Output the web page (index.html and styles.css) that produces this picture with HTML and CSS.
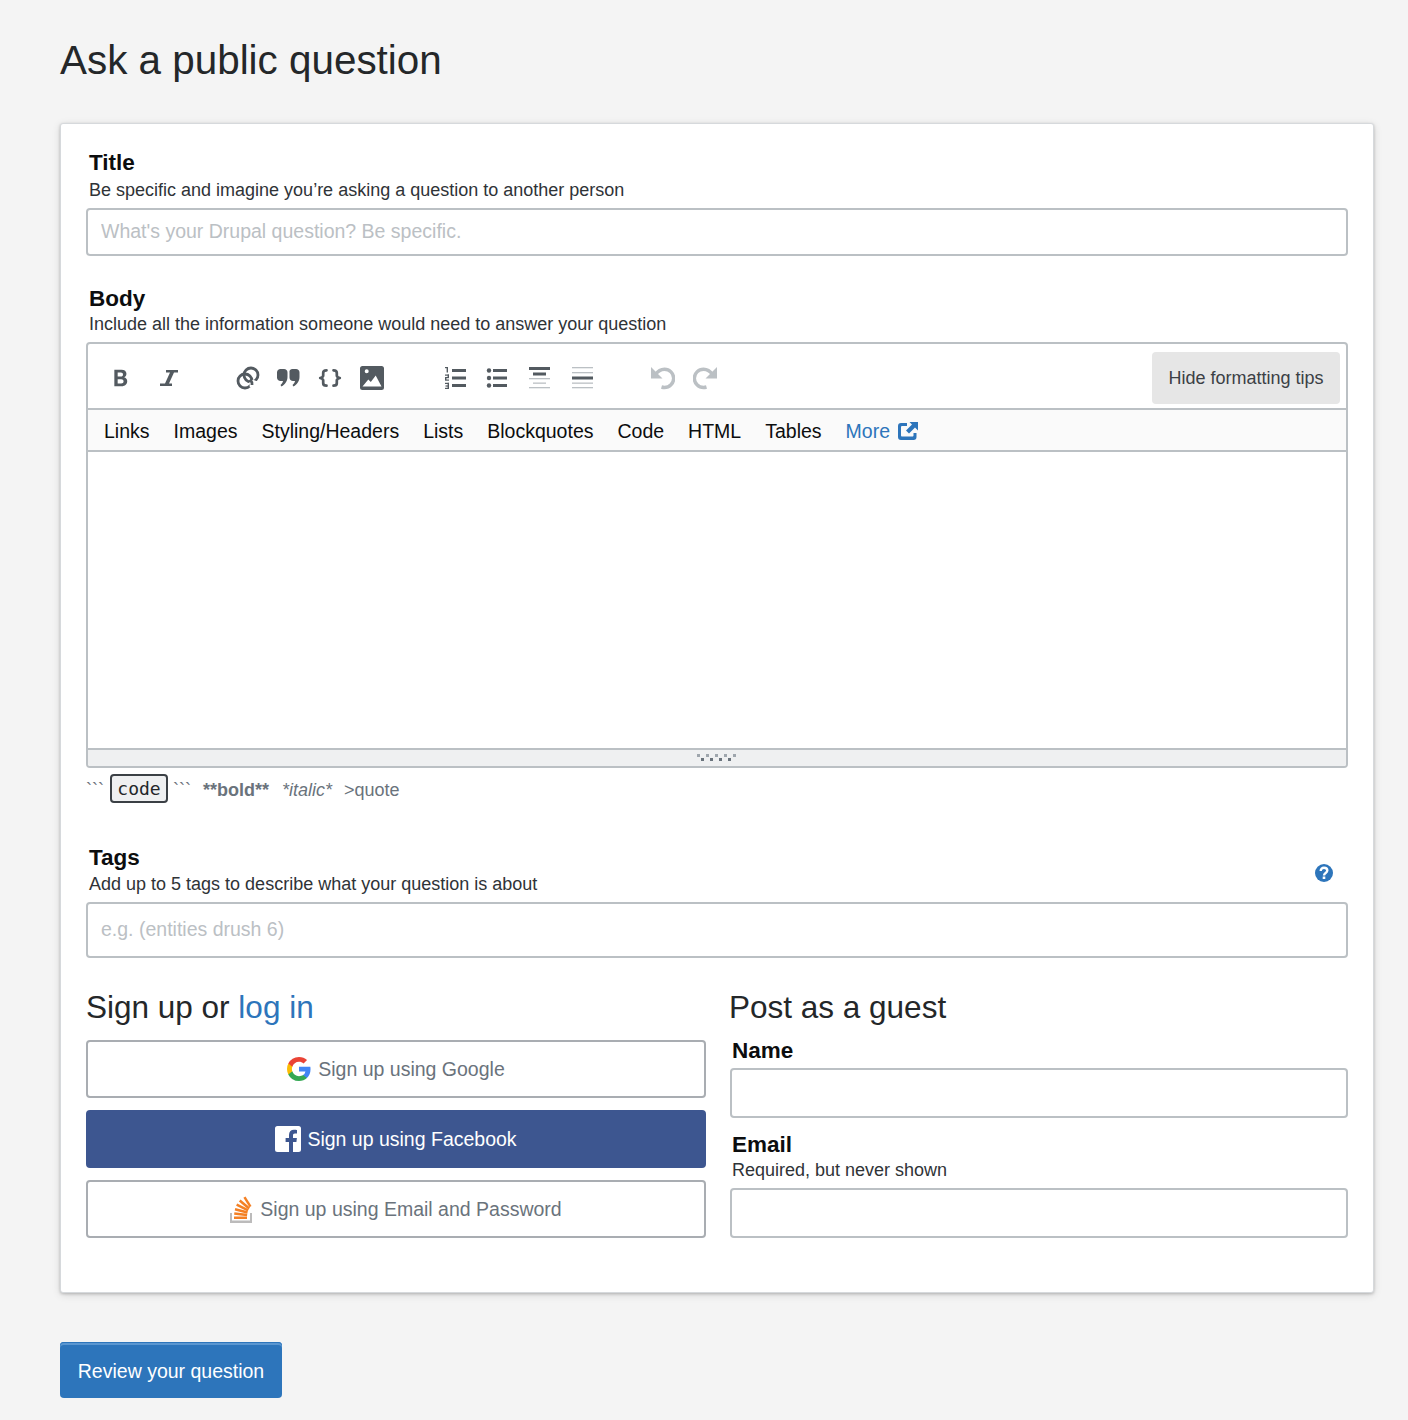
FILE: index.html
```html
<!DOCTYPE html>
<html lang="en">
<head>
  <meta charset="UTF-8">
  <meta name="viewport" content="width=device-width, initial-scale=1.0">
  <title>Ask a public question</title>
  <link rel="stylesheet" href="styles.css">
</head>
<body>
  <div class="page">
    <h1>Ask a public question</h1>

    <div class="card">
      <div class="field field-title">
        <label class="label" for="title">Title</label>
        <div class="sub">Be specific and imagine you’re asking a question to another person</div>
        <input class="input input-title" type="text" id="title" placeholder="What's your Drupal question? Be specific.">
      </div>

      <div class="field field-body">
        <label class="label">Body</label>
        <div class="sub">Include all the information someone would need to answer your question</div>
        <div class="editor">
          <div class="toolbar">
            <div class="tool-group group-text">
              <svg class="tool tool-bold" viewBox="0 0 18 18"><path fill="#535a60" fill-rule="evenodd" d="M3 1.500h6.400c2.900 0 4.500 1.400 4.500 3.700 0 1.500-.8 2.700-2.100 3.200 1.700.4 2.800 1.800 2.800 3.600 0 2.600-1.900 4.500-5 4.500H3zm3 2.500v3.700h2.800c1.300 0 2-.7 2-1.900 0-1.100-.7-1.800-2-1.800zm0 6.100V14h3.100c1.400 0 2.200-.7 2.200-2s-.8-1.900-2.200-1.900z"/></svg>
              <svg class="tool" viewBox="0 0 18 18"><path fill="#535a60" d="M6 1h12v2.600h-4L9 14.400h3V17H0v-2.600h5l5-10.800H6z"/></svg>
            </div>
            <div class="tool-group group-insert">
              <svg class="tool tool-icon" viewBox="0 0 24 24"><g fill="none"><circle cx="9" cy="15" r="7" stroke="#535a60" stroke-width="2.800"/><circle cx="15" cy="9" r="7" stroke="#535a60" stroke-width="2.800"/><path d="M19 14.500a7 7 0 0 1-5.500 4.500" stroke="#fff" stroke-width="5"/><path d="M14 13.500a7 7 0 0 1 2 5.500" stroke="#535a60" stroke-width="2.800"/></g></svg>
              <svg class="tool tool-icon tool-quote" viewBox="0 0 24 20"><path fill="#535a60" d="M4.500 1h3.500c2 0 3.500 1.500 3.500 3.500v4.500c0 4-2.500 7.500-6 9.500l-1-1.500c1.500-1.200 2.300-2.500 2.500-4H4.500C2.500 13 1 11.500 1 9.500v-5C1 2.500 2.500 1 4.500 1zm12 0H20c2 0 3.500 1.500 3.500 3.500v4.500c0 4-2.500 7.500-6 9.500l-1-1.500c1.500-1.200 2.300-2.500 2.500-4h-2c-2 0-3.500-1.500-3.500-3.500v-5C13 2.500 14.500 1 16.500 1z"/></svg>
              <svg class="tool tool-icon" viewBox="0 0 24 24"><g fill="none" stroke="#535a60" stroke-width="2.700" stroke-linecap="round" stroke-linejoin="round"><path d="M8.500 4.300C6 4.300 5.200 5 5.200 6.800v2.700c0 1.300-1 2-3 2.500 2 .5 3 1.200 3 2.500v2.700c0 1.800.8 2.500 3.300 2.500"/><path d="M15.500 4.300c2.500 0 3.300.7 3.300 2.500v2.700c0 1.300 1 2 3 2.500-2 .5-3 1.200-3 2.500v2.700c0 1.800-.8 2.500-3.300 2.500"/></g></svg>
              <svg class="tool tool-icon" viewBox="0 0 24 24"><path fill="#535a60" fill-rule="evenodd" d="M2.500 0h19A2.500 2.500 0 0 1 24 2.500v19a2.500 2.500 0 0 1-2.500 2.500h-19A2.500 2.500 0 0 1 0 21.500v-19A2.500 2.500 0 0 1 2.500 0zM6.700 3.300a2 2 0 1 0 0 4 2 2 0 0 0 0-4zM2.500 20.500h19L15.700 9.500 10.800 16l-2.500-2.500z"/></svg>
            </div>
            <div class="tool-group group-lists">
              <svg class="tool tool-icon" viewBox="0 0 24 22"><g fill="#535a60"><rect x="9" y="2" width="14" height="3"/><rect x="9" y="9.500" width="14" height="3"/><rect x="9" y="17" width="14" height="3"/><rect x="2" y="0" width="3" height="1.200"/><rect x="3.600" y="0" width="1.400" height="5.500"/><rect x="2" y="7.500" width="4" height="1.200"/><rect x="4.600" y="7.500" width="1.400" height="3"/><rect x="2" y="10" width="4" height="1.200"/><rect x="2" y="10" width="1.400" height="3"/><rect x="2" y="12.500" width="4" height="1.200"/><rect x="2" y="15.800" width="4" height="1.200"/><rect x="4.600" y="15.800" width="1.400" height="6.200"/><rect x="2.500" y="18.400" width="3.500" height="1.200"/><rect x="2" y="20.800" width="4" height="1.200"/></g></svg>
              <svg class="tool tool-icon" viewBox="0 0 24 22"><g fill="#535a60"><rect x="8" y="2" width="14" height="3"/><rect x="8" y="9.500" width="14" height="3"/><rect x="8" y="17" width="14" height="3"/><circle cx="4" cy="3.500" r="2.200"/><circle cx="4" cy="11" r="2.200"/><circle cx="4" cy="18.500" r="2.200"/></g></svg>
              <svg class="tool tool-icon" viewBox="0 0 24 22"><rect x="2" y="0" width="21" height="3" fill="#535a60"/><rect x="6" y="5.500" width="13" height="3" fill="#535a60"/><rect x="2" y="11" width="21" height="1.300" fill="#bbc0c4"/><rect x="6" y="15.500" width="13" height="1.300" fill="#bbc0c4"/><rect x="2" y="20" width="21" height="1.300" fill="#bbc0c4"/></svg>
              <svg class="tool tool-icon" viewBox="0 0 24 22"><rect x="3" y="0" width="21" height="1.300" fill="#bbc0c4"/><rect x="3" y="5" width="21" height="1.300" fill="#bbc0c4"/><rect x="3" y="9.500" width="21" height="3" fill="#535a60"/><rect x="3" y="15.500" width="21" height="1.300" fill="#bbc0c4"/><rect x="3" y="20" width="21" height="1.300" fill="#bbc0c4"/></svg>
            </div>
            <div class="tool-group group-history">
              <svg class="tool tool-icon" viewBox="0 0 24 24"><path fill="#bbc0c4" d="M0 1v11.500h11.500z"/><path fill="none" stroke="#bbc0c4" stroke-width="3.400" d="M4.500 8.500C6.500 5.500 10 3.200 13.500 3.200a9 9 0 0 1 0 18.300c-1 0-2-.2-3-.5"/></svg>
              <svg class="tool tool-icon" viewBox="0 0 24 24"><path fill="#bbc0c4" d="M24 1v11.500H12.500z"/><path fill="none" stroke="#bbc0c4" stroke-width="3.400" d="M19.500 8.500C17.500 5.500 14 3.200 10.500 3.200a9 9 0 0 0 0 18.300c1 0 2-.2 3-.5"/></svg>
            </div>
            <button class="tips-btn" type="button">Hide formatting tips</button>
          </div>
          <div class="help-bar">
            <a class="help-link">Links</a>
            <a class="help-link">Images</a>
            <a class="help-link">Styling/Headers</a>
            <a class="help-link">Lists</a>
            <a class="help-link">Blockquotes</a>
            <a class="help-link">Code</a>
            <a class="help-link">HTML</a>
            <a class="help-link">Tables</a>
            <a class="help-link help-more">More
              <svg class="more-icon" viewBox="0 0 20 18"><path fill="#2d75bb" d="M3 1h6v3H4a1 1 0 0 0-1 1v8.500c0 .5.500 1 1 1h10.500c.5 0 1-.5 1-1V11H18.500v4a3 3 0 0 1-3 3H3a3 3 0 0 1-3-3V4a3 3 0 0 1 3-3z"/><path fill="#2d75bb" d="M11.500 0H20v8.500l-3-3-6 6-3-3 6-6z"/></svg>
            </a>
          </div>
          <div class="text-area"></div>
          <div class="grip"><span class="grip-dots"></span></div>
        </div>
        <div class="hints">
          <span class="ticks">```</span><code class="code-key">code</code><span class="ticks ticks-end">```</span>
          <b class="hint">**bold**</b>
          <i class="hint hint-italic">*italic*</i>
          <span class="hint">&gt;quote</span>
        </div>
      </div>

      <div class="field field-tags">
        <div class="label-row">
          <div>
            <label class="label" for="tags">Tags</label>
            <div class="sub">Add up to 5 tags to describe what your question is about</div>
          </div>
          <svg class="help-icon" viewBox="0 0 18 18"><circle cx="9" cy="9" r="9" fill="#2d75bb"/><path fill="none" stroke="#fff" stroke-width="2.400" d="M5.700 7c0-2 1.400-3.200 3.300-3.200s3.300 1.100 3.300 2.800c0 2.500-3.300 2.400-3.300 4.900"/><rect x="7.700" y="12.500" width="2.600" height="2.500" fill="#fff"/></svg>
        </div>
        <input class="input input-tags" type="text" id="tags" placeholder="e.g. (entities drush 6)">
      </div>

      <div class="columns">
        <div class="col col-signup">
          <h2>Sign up or <a class="link">log in</a></h2>
          <div class="auth-btn">
            <svg class="auth-icon icon-google" viewBox="0 0 18 18"><path fill="#4285f4" d="M17.640 9.200c0-.64-.06-1.250-.16-1.840H9v3.480h4.840a4.140 4.140 0 0 1-1.800 2.720v2.260h2.920c1.700-1.570 2.680-3.880 2.680-6.620z"/><path fill="#34a853" d="M9 18c2.430 0 4.470-.8 5.960-2.180l-2.920-2.260c-.8.540-1.830.86-3.040.86-2.340 0-4.320-1.580-5.030-3.710H.96v2.330A9 9 0 0 0 9 18z"/><path fill="#fbbc05" d="M3.970 10.710A5.400 5.400 0 0 1 3.680 9c0-.59.100-1.170.29-1.710V4.960H.96A9 9 0 0 0 0 9c0 1.450.35 2.830.96 4.040z"/><path fill="#ea4335" d="M9 3.580c1.320 0 2.510.45 3.440 1.350l2.580-2.590C13.460.89 11.430 0 9 0A9 9 0 0 0 .96 4.960l3.010 2.330C4.680 5.160 6.660 3.580 9 3.580z"/></svg>
            Sign up using Google
          </div>
          <div class="auth-btn auth-facebook">
            <svg class="auth-icon icon-fb" viewBox="0 0 26 26"><path fill="#fff" d="M2.500 0h21A2.500 2.500 0 0 1 26 2.500v21a2.500 2.500 0 0 1-2.500 2.500H18V16h3.400l.5-4H18V9.500c0-1.200.4-2 2-2h2V4c-.4 0-1.600-.2-3-.2-3 0-5 1.800-5 5.100V12h-3.400v4H14v10H2.500A2.500 2.500 0 0 1 0 23.500v-21A2.500 2.500 0 0 1 2.500 0z"/></svg>
            Sign up using Facebook
          </div>
          <div class="auth-btn">
            <svg class="auth-icon icon-so" viewBox="0 0 22 27"><path fill="#bcbbbb" d="M0 17h2v7.500h18V17h2v10H0z"/><g fill="#f48024"><rect x="4" y="20.500" width="13" height="2.500"/><path d="M4.400 16.300l12.900 1.400-.3 2.500L4.100 18.800z"/><path d="M5.300 12l12.500 3.300-.6 2.400L4.700 14.400z"/><path d="M7.200 7.500l11.500 5.700-1.100 2.200L6.100 9.700z"/><path d="M10.500 3.600l9.500 8-1.600 1.900-9.500-8z"/><path d="M15.500 0.500l6 9.500-2.100 1.300-6-9.500z"/></g></svg>
            Sign up using Email and Password
          </div>
        </div>
        <div class="col col-guest">
          <h2 class="guest-title">Post as a guest</h2>
          <label class="label label-name" for="name">Name</label>
          <input class="input input-guest" type="text" id="name">
          <label class="label label-email" for="email">Email</label>
          <div class="sub sub-email">Required, but never shown</div>
          <input class="input input-guest" type="text" id="email">
        </div>
      </div>
    </div>

    <button class="review-btn" type="button">Review your question</button>
  </div>
</body>
</html>
```

FILE: styles.css
```css
* {
  box-sizing: border-box;
}

html,
body {
  height: 100%;
}

body {
  margin: 0;
  background-color: #f4f4f4;
  font-family: "Liberation Sans", Arial, sans-serif;
  color: #242729;
  overflow: hidden;
}

.page {
  padding: 0 34px 0 60px;
}

h1 {
  margin: 0;
  padding-top: 36px;
  height: 123px;
  font-size: 40.4px;
  line-height: 48px;
  font-weight: 400;
}

.card {
  height: 1170px;
  padding: 25px 25px 0;
  background-color: #fff;
  border: 1px solid #d6d9dc;
  border-radius: 3px;
  box-shadow: 0 1px 3px rgba(0, 0, 0, 0.2), 0 2px 8px rgba(0, 0, 0, 0.12);
}

.label {
  display: block;
  padding-left: 3px;
  font-size: 22.5px;
  line-height: 28px;
  font-weight: 700;
  color: #0c0d0e;
}

.sub {
  padding-left: 3px;
  font-size: 18px;
  line-height: 24px;
  color: #2f3337;
}

.field-title .sub {
  margin-top: 1px;
}

.field-body .sub {
  margin-top: -1px;
}

.input {
  display: block;
  width: 100%;
  padding: 0 13px 2px;
  background-color: #fff;
  border: 2px solid #bbc0c4;
  border-radius: 4px;
  font-family: inherit;
  font-size: 19.5px;
  color: #242729;
}

.input::placeholder {
  color: #bbc0c4;
  opacity: 1;
}

.input-title {
  height: 48px;
  margin-top: 6px;
}

.field-body {
  margin-top: 29px;
}

.editor {
  height: 426px;
  margin-top: 6px;
  border: 2px solid #bbc0c4;
  border-radius: 4px;
  display: flex;
  flex-direction: column;
  overflow: hidden;
}

.toolbar {
  display: flex;
  align-items: center;
  height: 66px;
  flex: none;
  padding: 4px 6px 0 22px;
  border-bottom: 2px solid #bbc0c4;
}

.tool-group {
  display: flex;
  align-items: center;
}

.group-text {
  gap: 29px;
  width: 126px;
}

.group-insert {
  gap: 18px;
  width: 207px;
}

.group-lists {
  gap: 18px;
  width: 208px;
}

.group-history {
  gap: 18px;
}

.tool {
  width: 18px;
  height: 18px;
  flex: none;
}

.tool-bold {
  width: 20px;
  height: 20px;
  margin-left: 1px;
}

.tool-icon {
  width: 24px;
  height: 24px;
}

.tool-quote {
  margin-left: -2px;
}

.tips-btn {
  width: 188px;
  height: 52px;
  margin-left: auto;
  padding: 0;
  background-color: #e6e6e6;
  border: none;
  border-radius: 4px;
  font-family: inherit;
  font-size: 18px;
  color: #3b4045;
}

.help-bar {
  display: flex;
  align-items: center;
  gap: 24px;
  height: 42px;
  flex: none;
  padding: 2px 16px 0;
  background-color: #fafafa;
  border-bottom: 2px solid #bbc0c4;
  font-size: 19.5px;
}

.help-link {
  color: #0c0d0e;
}

.help-more {
  display: flex;
  align-items: center;
  gap: 8px;
  color: #2d75bb;
}

.more-icon {
  width: 20px;
  height: 18px;
}

.text-area {
  flex: 1;
}

.grip {
  height: 18px;
  flex: none;
  display: flex;
  justify-content: center;
  align-items: center;
  background-color: #eff0f1;
  border-top: 2px solid #bbc0c4;
}

.grip-dots {
  width: 40px;
  height: 8px;
  background-image:
    radial-gradient(circle at 1.500px 1.500px, #9fa6ad 1.500px, transparent 1.600px),
    radial-gradient(circle at 1.500px 1.500px, #6a737c 1.500px, transparent 1.600px);
  background-size: 9px 4px, 9px 4px;
  background-position: 0 0, 4px 4px;
  background-repeat: repeat-x;
}

.hints {
  display: flex;
  align-items: center;
  height: 36px;
  margin-top: 4px;
  font-size: 18px;
  color: #6a737c;
}

.ticks {
  width: 24px;
  align-self: flex-start;
  margin-top: 6px;
  font-size: 18px;
  line-height: 24px;
  color: #6a737c;
}

.ticks-end {
  width: 30px;
  margin-left: 5px;
}

.code-key {
  width: 58px;
  height: 29px;
  margin-bottom: 3px;
  text-align: center;
  background-color: #eff0f1;
  border: 2px solid #3b4045;
  border-radius: 4px;
  font-family: "DejaVu Sans Mono", monospace;
  font-size: 18px;
  line-height: 25px;
  color: #242729;
}

.hint {
  margin-right: 13px;
}

.hint-italic {
  margin-right: 12px;
}

.field-tags {
  margin-top: 36px;
}

.label-row {
  display: flex;
  justify-content: space-between;
}

.help-icon {
  width: 18px;
  height: 18px;
  margin: 20px 15px 0 0;
}

.input-tags {
  height: 56px;
  margin-top: 6px;
}

.columns {
  display: grid;
  grid-template-columns: 620px 618px;
  column-gap: 24px;
  margin-top: 29px;
}

h2 {
  margin: 0;
  height: 53px;
  font-size: 31.5px;
  line-height: 40px;
  font-weight: 400;
}

.guest-title {
  margin-left: -1px;
  height: 50px;
}

.link {
  color: #2d75bb;
}

.auth-btn {
  display: flex;
  align-items: center;
  justify-content: center;
  height: 58px;
  margin-bottom: 12px;
  background-color: #fff;
  border: 2px solid #a9adb2;
  border-radius: 4px;
  font-size: 19.5px;
  color: #6a737c;
}

.auth-facebook {
  background-color: #3d5690;
  border-color: #3d5690;
  color: #fff;
}

.auth-icon {
  flex: none;
}

.icon-google {
  width: 24px;
  height: 24px;
  margin-right: 7px;
}

.icon-fb {
  width: 26px;
  height: 26px;
  margin-right: 6px;
}

.icon-so {
  width: 22px;
  height: 27px;
  margin-right: 8px;
}

.label-name {
  padding-left: 2px;
  margin-bottom: 3px;
}

.input-guest {
  height: 50px;
}

.label-email {
  padding-left: 2px;
  margin-top: 13px;
}

.sub-email {
  padding-left: 2px;
  margin-top: -1px;
}

.sub-email + .input-guest {
  margin-top: 6px;
}

.review-btn {
  display: block;
  width: 222px;
  height: 56px;
  margin-top: 49px;
  padding: 2px 0 0;
  background-color: #2d75bb;
  border: none;
  border-radius: 4px;
  box-shadow: inset 0 1px 0 #2d75bb, inset 0 3px 0 #5a96d0;
  font-family: inherit;
  font-size: 19.5px;
  color: #fff;
}
```
